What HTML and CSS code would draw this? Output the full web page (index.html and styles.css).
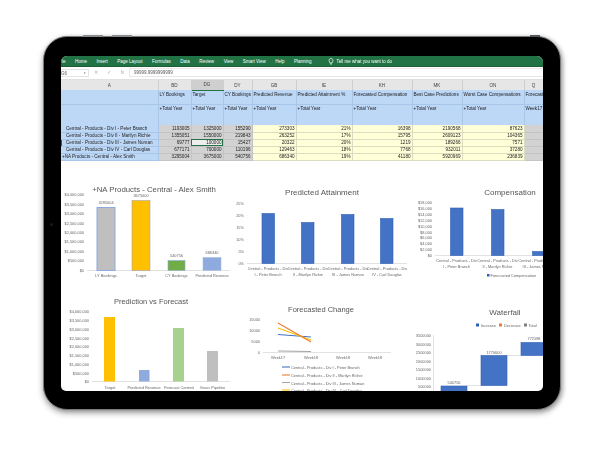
FILE: index.html
```html
<!DOCTYPE html>
<html lang="en">
<head>
    <meta charset="UTF-8">
    <title>Sales dashboard on tablet</title>
    <link rel="stylesheet" href="styles.css">
</head>
<body>
<div class="tablet">
    <span class="btn btn-a"></span>
    <span class="btn btn-b"></span>
    <span class="btn btn-c"></span>
    <span class="camera"></span>
    <div class="screen">
        <div class="ribbon">
            <span class="tab tab-file">le</span>
            <span class="tab">Home</span>
            <span class="tab">Insert</span>
            <span class="tab">Page Layout</span>
            <span class="tab">Formulas</span>
            <span class="tab">Data</span>
            <span class="tab">Review</span>
            <span class="tab">View</span>
            <span class="tab">Smart View</span>
            <span class="tab">Help</span>
            <span class="tab">Planning</span>
            <svg class="bulb" width="6" height="7" viewBox="0 0 6 7"><path d="M3 .5a2 2 0 0 1 1.2 3.600V5H1.800v-.9A2 2 0 0 1 3 .5zM2 6h2" fill="none" stroke="#fff" stroke-width=".7"/></svg>
            <span class="tab">Tell me what you want to do</span>
        </div>
        <div class="formula">
            <div class="namebox"><span>G6</span><span class="caret">▾</span></div>
            <div class="fx"><span>✕</span><span>✓</span><span>fx</span></div>
            <div class="fbox">99999.9999999999</div>
        </div>
        <table class="sheet">
            <colgroup>
                <col class="c-a"><col class="c-bd"><col class="c-dg"><col class="c-dy"><col class="c-gb">
                <col class="c-ie"><col class="c-kh"><col class="c-mk"><col class="c-on"><col class="c-x">
            </colgroup>
            <tr class="heads">
                <th>A</th><th>BD</th><th class="sel">DG</th><th>DY</th><th>GB</th><th>IE</th><th>KH</th><th>MK</th><th>ON</th><th>Q</th>
            </tr>
            <tr class="names">
                <td></td><td>LY Bookings</td><td>Target</td><td>CY Bookings</td><td>Predicted Revenue</td><td>Predicted Attainment %</td><td>Forecasted Compensation</td><td>Best Case Predictions</td><td>Worst Case Compensations</td><td>Forecast</td>
            </tr>
            <tr class="period">
                <td></td><td>+Total Year</td><td>+Total Year</td><td>+Total Year</td><td>+Total Year</td><td>+Total Year</td><td>+Total Year</td><td>+Total Year</td><td>+Total Year</td><td>Week17</td>
            </tr>
            <tr class="row">
                <td class="lbl">Central - Products - Div I - Peter Branch</td><td class="g">1193005</td><td class="g">1325000</td><td class="g">155290</td><td class="y">273303</td><td class="y">21%</td><td class="y">16398</td><td class="y">2190568</td><td class="y">87623</td><td class="g"></td>
            </tr>
            <tr class="row">
                <td class="lbl">Central - Products - Div II - Marilyn Richie</td><td class="g">1355051</td><td class="g">1550000</td><td class="g">219843</td><td class="y">263252</td><td class="y">17%</td><td class="y">15795</td><td class="y">2609123</td><td class="y">104365</td><td class="g"></td>
            </tr>
            <tr class="row">
                <td class="lbl mark">Central - Products - Div III - James Numan</td><td class="g">69777</td><td class="g cur">100000</td><td class="g">15427</td><td class="y">20322</td><td class="y">20%</td><td class="y">1219</td><td class="y">189266</td><td class="y">7571</td><td class="g"></td>
            </tr>
            <tr class="row">
                <td class="lbl">Central - Products - Div IV - Carl Douglas</td><td class="g">677171</td><td class="g">700000</td><td class="g">110196</td><td class="y">129463</td><td class="y">18%</td><td class="y">7768</td><td class="y">932011</td><td class="y">37280</td><td class="g"></td>
            </tr>
            <tr class="row">
                <td class="lbl top">+NA Products - Central - Alex Smith</td><td class="g">3295004</td><td class="g">3675000</td><td class="g">540756</td><td class="y">686340</td><td class="y">19%</td><td class="y">41180</td><td class="y">5920969</td><td class="y">236839</td><td class="g"></td>
            </tr>
        </table>
        <div class="charts">
            <!-- viewBoxes use the same numbers as the screenshot so bars are easy to read off -->
            <svg class="chart" viewBox="61 161 172 129">
                <text class="title big" x="154" y="192">+NA Products - Central - Alex Smith</text>
                <g class="ax end">
                    <text x="84" y="196">$4,000,000</text><text x="84" y="205.500">$3,500,000</text><text x="84" y="215">$3,000,000</text><text x="84" y="224.500">$2,500,000</text><text x="84" y="234">$2,000,000</text><text x="84" y="243">$1,500,000</text><text x="84" y="252.500">$1,000,000</text><text x="84" y="262">$500,000</text><text x="84" y="272">$0</text>
                </g>
                <line class="base" x1="87" y1="270.500" x2="230" y2="270.500"/>
                <rect x="97" y="207.500" width="18" height="63" fill="#bfbfbf" stroke="#8faadc"/>
                <rect x="132" y="200.500" width="18" height="70" fill="#ffc000" stroke="#a5a5a5" stroke-width=".6"/>
                <rect x="168" y="260.500" width="17" height="10" fill="#70ad47" stroke="#8faadc" stroke-width=".6"/>
                <rect x="203" y="257.500" width="18" height="13" fill="#8faadc" stroke="#a9bde4" stroke-width=".6"/>
                <g class="ax mid">
                    <text x="106" y="204">3295004</text><text x="141" y="197">3675000</text><text x="176.500" y="257">540756</text><text x="212" y="254">686340</text>
                    <text x="106" y="277">LY Bookings</text><text x="141" y="277">Target</text><text x="176.500" y="277">CY Bookings</text><text x="212" y="277">Predicted Revenue</text>
                </g>
            </svg>
            <svg class="chart" viewBox="233 161 178 129">
                <text class="title" x="322" y="195">Predicted Attainment</text>
                <g class="ax end">
                    <text x="244" y="205">25%</text><text x="244" y="217">20%</text><text x="244" y="229">15%</text><text x="244" y="241">10%</text><text x="244" y="253">5%</text><text x="244" y="265">0%</text>
                </g>
                <line class="base" x1="247" y1="263.500" x2="407" y2="263.500"/>
                <rect class="bar" x="262" y="213.500" width="12.500" height="50"/>
                <rect class="bar" x="301.500" y="222.500" width="12.500" height="41"/>
                <rect class="bar" x="341.500" y="214.500" width="12.500" height="49"/>
                <rect class="bar" x="380.500" y="218.500" width="12.500" height="45"/>
                <g class="ax mid">
                    <text x="268" y="270">Central - Products - Div</text><text x="308" y="270">Central - Products - Div</text><text x="348" y="270">Central - Products - Div</text><text x="387" y="270">Central - Products - Div</text>
                    <text x="268" y="276">I - Peter Branch</text><text x="308" y="276">II - Marilyn Richie</text><text x="348" y="276">III - James Numan</text><text x="387" y="276">IV - Carl Douglas</text>
                </g>
            </svg>
            <svg class="chart" viewBox="411 161 132 129">
                <text class="title" x="510" y="195">Compensation</text>
                <g class="ax end">
                    <text x="432" y="204">$18,000</text><text x="432" y="210">$16,000</text><text x="432" y="216">$14,000</text><text x="432" y="221.500">$12,000</text><text x="432" y="227.500">$10,000</text><text x="432" y="233.500">$8,000</text><text x="432" y="239">$6,000</text><text x="432" y="245">$4,000</text><text x="432" y="251">$2,000</text><text x="432" y="257">$0</text>
                </g>
                <line class="base" x1="435" y1="255.500" x2="543" y2="255.500"/>
                <rect class="bar" x="450.500" y="208" width="12.500" height="47.500"/>
                <rect class="bar" x="491.500" y="209.500" width="12.500" height="46"/>
                <rect class="bar" x="532.500" y="251.500" width="14" height="4"/>
                <g class="ax mid">
                    <text x="456.500" y="262">Central - Products - Div</text><text x="497.500" y="262">Central - Products - Div</text><text x="538.500" y="262">Central - Products - Div</text>
                    <text x="456.500" y="268">I - Peter Branch</text><text x="497.500" y="268">II - Marilyn Richie</text><text x="538.500" y="268">III - James Numan</text>
                </g>
                <rect x="487" y="274" width="2.500" height="2.500" fill="#2f5fb5"/>
                <text class="ax" x="490.500" y="277">Forecasted Compensation</text>
            </svg>
            <svg class="chart" viewBox="61 290 172 101">
                <text class="title small" x="151" y="304">Prediction vs Forecast</text>
                <g class="ax end">
                    <text x="89" y="313">$4,000,000</text><text x="89" y="322">$3,500,000</text><text x="89" y="330.500">$3,000,000</text><text x="89" y="339.500">$2,500,000</text><text x="89" y="348">$2,000,000</text><text x="89" y="357">$1,500,000</text><text x="89" y="366">$1,000,000</text><text x="89" y="374.500">$500,000</text><text x="89" y="383">$0</text>
                </g>
                <line class="base" x1="92" y1="381.500" x2="230" y2="381.500"/>
                <rect x="104" y="317" width="11" height="64.500" fill="#ffc000"/>
                <rect x="139" y="370" width="10.500" height="11.500" fill="#8faadc"/>
                <rect x="173" y="328" width="11" height="53.500" fill="#a9d18e"/>
                <rect x="207" y="351" width="11" height="30.500" fill="#bfbfbf"/>
                <g class="ax mid">
                    <text x="110" y="389">Target</text><text x="144" y="389">Predicted Revenue</text><text x="179" y="389">Forecast Commit</text><text x="212.500" y="389">Gross Pipeline</text>
                </g>
            </svg>
            <svg class="chart" viewBox="233 290 178 101">
                <text class="title small" x="321" y="312">Forecasted Change</text>
                <g class="ax end">
                    <text x="260" y="321">15000</text><text x="260" y="332">10000</text><text x="260" y="343">5000</text><text x="260" y="354">0</text>
                </g>
                <line class="base" x1="263" y1="352.500" x2="391" y2="352.500"/>
                <g class="ax mid">
                    <text x="278" y="359">Week17</text><text x="311" y="359">Week18</text><text x="343" y="359">Week18</text><text x="375" y="359">Week18</text>
                </g>
                <g class="lines">
                    <line x1="278" y1="334.500" x2="311" y2="337" stroke="#4472c4"/>
                    <line x1="278" y1="351" x2="311" y2="351.500" stroke="#a5a5a5"/>
                    <line x1="278" y1="328" x2="311" y2="340" stroke="#ffc000"/>
                    <line x1="278" y1="323" x2="311" y2="342" stroke="#ed7d31"/>
                    <line x1="282" y1="367" x2="290" y2="367" stroke="#4472c4"/>
                    <line x1="282" y1="375" x2="290" y2="375" stroke="#ed7d31"/>
                    <line x1="282" y1="382.500" x2="290" y2="382.500" stroke="#a5a5a5"/>
                    <line x1="282" y1="390" x2="290" y2="390" stroke="#ffc000"/>
                </g>
                <g class="ax">
                    <text x="291" y="369">Central - Products - Div I - Peter Branch</text>
                    <text x="291" y="377">Central - Products - Div II - Marilyn Richie</text>
                    <text x="291" y="384.500">Central - Products - Div III - James Numan</text>
                    <text x="291" y="392">Central - Products - Div IV - Carl Douglas</text>
                </g>
            </svg>
            <svg class="chart" viewBox="411 290 132 101">
                <text class="title" x="505" y="315">Waterfall</text>
                <rect x="476" y="323.500" width="3" height="3" fill="#2f5fb5"/>
                <rect x="499" y="323.500" width="3" height="3" fill="#ed7d31"/>
                <rect x="524" y="323.500" width="3" height="3" fill="#7f7f7f"/>
                <g class="ax">
                    <text x="481" y="327">Increase</text><text x="504" y="327">Decrease</text><text x="528.500" y="327">Total</text>
                </g>
                <g class="ax end">
                    <text x="431" y="337">3500000</text><text x="431" y="345.500">3000000</text><text x="431" y="354">2500000</text><text x="431" y="362.500">2000000</text><text x="431" y="371">1500000</text><text x="431" y="379.500">1000000</text><text x="431" y="388">500000</text>
                </g>
                <line class="base" x1="433.500" y1="335" x2="433.500" y2="391"/>
                <line class="base" x1="467" y1="385.500" x2="481" y2="385.500"/>
                <line class="base" x1="507" y1="355.500" x2="521" y2="355.500"/>
                <rect class="bar" x="441" y="386" width="26" height="8"/>
                <rect class="bar" x="481" y="355.500" width="26" height="30"/>
                <rect class="bar" x="521" y="342.500" width="26" height="13"/>
                <g class="ax mid">
                    <text x="454" y="384">540756</text><text x="494" y="354">1770600</text><text x="534" y="340">772588</text>
                </g>
            </svg>
        </div>
    </div>
</div>
</body>
</html>
```

FILE: styles.css
```css
* {
    margin: 0;
    padding: 0;
    box-sizing: border-box;
}

body {
    width: 600px;
    height: 450px;
    padding: 36px 39px 0 43px;
    background: #fff;
    font-family: "Liberation Sans", Arial, sans-serif;
    overflow: hidden;
}

.tablet {
    position: relative;
    width: 518px;
    height: 374px;
    padding: 19px 17px 18px 17px;
    background: #000;
    border: 1px solid #777b7e;
    border-radius: 24px;
    box-shadow: 0 3px 6px rgba(0, 0, 0, .35), 2px 1px 4px rgba(0, 0, 0, .2);
}

.btn {
    position: absolute;
    top: -2px;
    height: 2px;
    background: #8a8d90;
}

.btn-a {
    left: 39px;
    width: 20px;
}

.btn-b {
    left: 68px;
    width: 20px;
}

.btn-c {
    left: 486px;
    width: 10px;
    background: #55585a;
}

.camera {
    position: absolute;
    left: 6px;
    top: 186px;
    width: 3px;
    height: 3px;
    border-radius: 50%;
    background: #141a26;
}

.screen {
    display: flex;
    flex-direction: column;
    height: 335px;
    border-radius: 6px 6px 5px 5px;
    background: #fff;
    overflow: hidden;
    filter: blur(.4px);
}

.ribbon {
    display: flex;
    align-items: center;
    flex: none;
    gap: 9.500px;
    height: 11px;
    border-bottom: 1px solid #1b5e39;
    background: #217346;
    color: #fff;
    white-space: nowrap;
}

.tab {
    font-size: 4.500px;
}

.tab-file {
    margin-left: 1px;
}

.bulb {
    margin: 0 -7px 0 7px;
}

.formula {
    display: flex;
    align-items: center;
    flex: none;
    height: 13px;
    padding: 1.500px 0 2px;
    background: #fff;
    border-bottom: 1px solid #e0e0e0;
    font-size: 4.500px;
    color: #555;
}

.namebox {
    display: flex;
    justify-content: space-between;
    width: 28px;
    height: 8px;
    padding: 0 2px 0 0;
    line-height: 7px;
    background: #fff;
    border: 1px solid #e4e4e4;
    border-left: 0;
}

.caret {
    font-size: 3px;
}

.fx {
    display: flex;
    justify-content: space-around;
    width: 40px;
    color: #aaa;
}

.fbox {
    flex: 1;
    height: 9px;
    padding-left: 4px;
    line-height: 8px;
    border: 1px solid #e8e8e8;
    border-right: 0;
}

.sheet {
    flex: none;
    width: 482px;
    table-layout: fixed;
    border-collapse: collapse;
    font-size: 4.600px;
    line-height: 5px;
    color: #222;
    white-space: nowrap;
}

.c-a { width: 97px; }
.c-bd { width: 33px; }
.c-dg { width: 32px; }
.c-dy { width: 29px; }
.c-gb { width: 44px; }
.c-ie { width: 56px; }
.c-kh { width: 60px; }
.c-mk { width: 50px; }
.c-on { width: 62px; }
.c-x { width: 19px; }

.sheet td,
.sheet th {
    overflow: hidden;
    border: 1px solid #a9c6e8;
    border-width: 0 1px 0 0;
    font-weight: normal;
}

.heads th {
    height: 10px;
    background: #e6e6e6;
    border-color: #cfcfcf;
    text-align: center;
    color: #444;
}

.heads .sel {
    background: #cfcfcf;
    border-bottom: 1px solid #217346;
}

.names td {
    height: 14px;
    padding: 0 0 5px 1px;
    background: #bdd7f7;
    border-bottom: 1px solid #a9c6e8;
}

.period td {
    height: 21px;
    padding: 1px 0 0 1px;
    vertical-align: top;
    background: #bdd7f7;
}

.row td {
    height: 7px;
    line-height: 5px;
    padding-right: 1px;
    text-align: right;
    border-bottom: 1px solid #e8e8c8;
}

.row .lbl {
    padding: 0 0 0 5px;
    text-align: left;
    background: #bdd7f7;
    border-bottom-color: #a9c6e8;
}

.row .top {
    padding-left: 1px;
}

.row .mark {
    box-shadow: inset 1px 0 0 #217346;
}

.row .g {
    background: #d2d2d2;
    border-color: #c4c4c4;
}

.row .y {
    background: #ffffd8;
    border-color: #dcdcc0;
}

.row .cur {
    background: #eee;
    outline: 1px solid #217346;
    outline-offset: -1px;
}

.charts {
    display: grid;
    flex: none;
    grid-template-columns: 172px 178px 132px;
    grid-template-rows: 129px 101px;
    height: 230px;
    overflow: hidden;
}

.chart {
    display: block;
    width: 100%;
    height: 100%;
}

.title {
    font-size: 8px;
    fill: #555;
    text-anchor: middle;
}

.title.big {
    font-size: 7.800px;
}

.title.small {
    font-size: 7.500px;
}

.ax text,
text.ax {
    font-size: 3.900px;
    fill: #666;
}

.ax.end text {
    text-anchor: end;
}

.ax.mid text {
    text-anchor: middle;
}

.base {
    stroke: #e2e2e2;
    stroke-width: 1;
}

.bar {
    fill: #4472c4;
    stroke: #2f5fb5;
    stroke-width: .6;
}

.lines line {
    stroke-width: 1.100;
}
```
